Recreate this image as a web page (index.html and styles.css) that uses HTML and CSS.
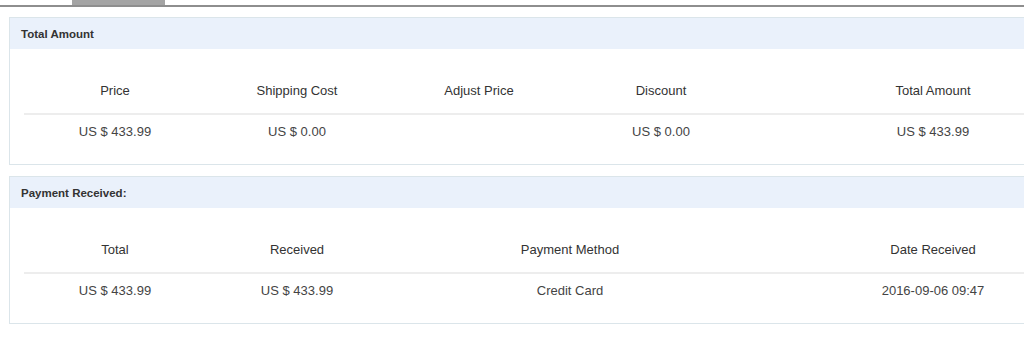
FILE: index.html
```html
<!DOCTYPE html>
<html>
<head>
<meta charset="utf-8">
<link rel="stylesheet" href="styles.css">
</head>
<body>
<div class="page">
<div class="tabbar"><div class="tab"></div></div>

<section class="panel">
  <div class="panel-head">Total Amount</div>
  <div class="grid grid-total">
    <div class="th">Price</div>
    <div class="th">Shipping Cost</div>
    <div class="th">Adjust Price</div>
    <div class="th">Discount</div>
    <div class="th">Total Amount</div>
    <div class="td">US $ 433.99</div>
    <div class="td">US $ 0.00</div>
    <div class="td"></div>
    <div class="td">US $ 0.00</div>
    <div class="td">US $ 433.99</div>
  </div>
</section>

<section class="panel">
  <div class="panel-head">Payment Received:</div>
  <div class="grid grid-payment">
    <div class="th">Total</div>
    <div class="th">Received</div>
    <div class="th">Payment Method</div>
    <div class="th">Date Received</div>
    <div class="td">US $ 433.99</div>
    <div class="td">US $ 433.99</div>
    <div class="td">Credit Card</div>
    <div class="td">2016-09-06 09:47</div>
  </div>
</section>
</div>
</body>
</html>
```

FILE: styles.css
```css
html, body {
  margin: 0;
  padding: 0;
  overflow: hidden;
  background: #ffffff;
}
body {
  font-family: "Liberation Sans", Arial, sans-serif;
  font-size: 13px;
  color: #333333;
}
.page {
  width: 1024px;
  overflow: hidden;
}
.tabbar {
  display: flex;
  height: 5px;
  border-bottom: 2px solid #8e8e8e;
}
.tab {
  margin-left: 72px;
  width: 93px;
  background: #a4a4a4;
}
.panel {
  margin: 10px 0 11px 9px;
  width: 1130px;
  border: 1px solid #dbe5ea;
  padding-bottom: 17px;
}
.panel-head {
  height: 31px;
  line-height: 32px;
  padding-left: 11px;
  background: #eaf1fb;
  font-weight: bold;
  font-size: 11.5px;
  color: #333333;
}
.grid {
  display: grid;
  margin: 19px 0 0 14px;
}
.grid-total {
  grid-template-columns: 182px 182px 182px 182px 362px;
}
.grid-payment {
  grid-template-columns: 182px 182px 364px 362px;
}
.th {
  height: 45px;
  line-height: 45px;
  text-align: center;
  border-bottom: 2px solid #ededed;
  color: #333333;
}
.td {
  height: 31px;
  padding-top: 1px;
  line-height: 32px;
  text-align: center;
  color: #444444;
}
```
